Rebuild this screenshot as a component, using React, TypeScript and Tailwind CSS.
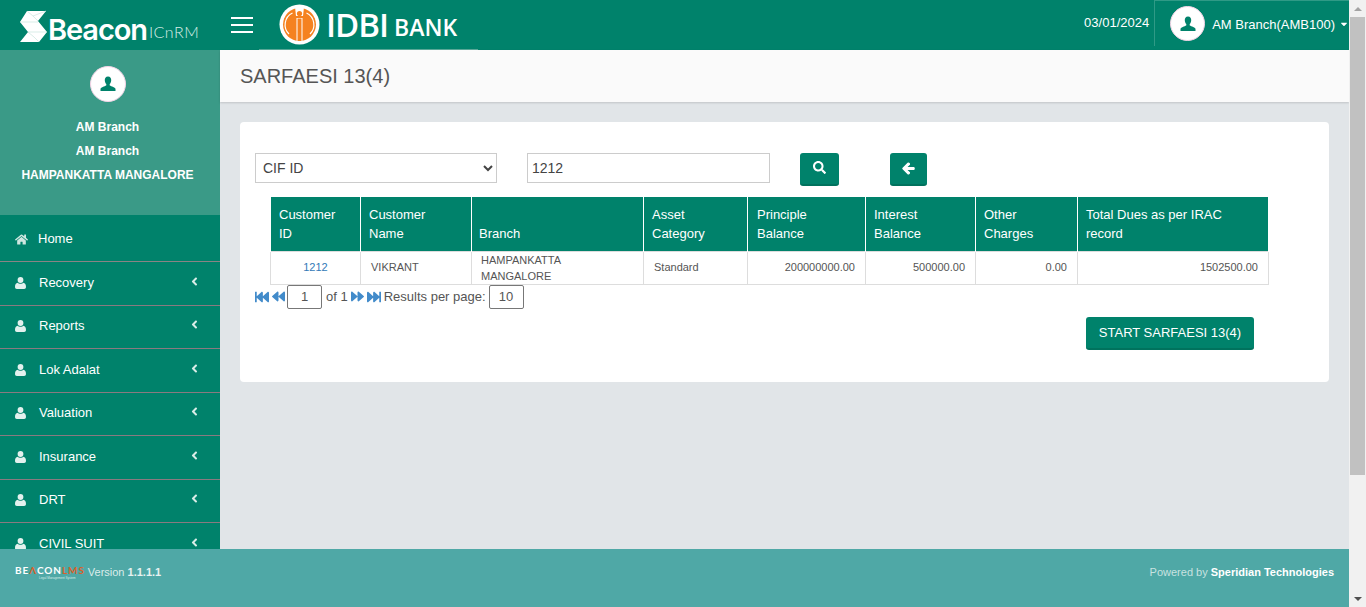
import { FaHome, FaAngleLeft, FaSearch, FaArrowLeft, FaCaretDown, FaFastBackward, FaBackward, FaForward, FaFastForward } from "react-icons/fa";

const menu = ["Recovery", "Reports", "Lok Adalat", "Valuation", "Insurance", "DRT", "CIVIL SUIT"];

const columns = [
  { label: ["Customer", "ID"], width: "w-[90px]", pad: "pl-2" },
  { label: ["Customer", "Name"], width: "w-[111px]", pad: "pl-2" },
  { label: ["Branch"], width: "w-[172px]", pad: "pl-[7px]" },
  { label: ["Asset", "Category"], width: "w-[104px]", pad: "pl-2" },
  { label: ["Principle", "Balance"], width: "w-[118px]", pad: "pl-[9px]" },
  { label: ["Interest", "Balance"], width: "w-[110px]", pad: "pl-2" },
  { label: ["Other", "Charges"], width: "w-[102px]", pad: "pl-2" },
  { label: ["Total Dues as per IRAC", "record"], width: "w-[191px]", pad: "pl-2" },
];

const Avatar = ({ size }: { size: string }) => (
  <div className={`${size} rounded-full bg-white border border-[#f3d3e6] flex items-center justify-center shrink-0`}>
    <svg width="16" height="16" viewBox="0 0 16 16" fill="#00826b">
      <path d="M8 0.5c2.300 0 3.400 1.800 3.200 3.900-.1 1.500-.7 2.800-1.500 3.600v1.300c0 .8 4.800 1.600 5.800 3.400v2.300H.5v-2.300c1-1.800 5.800-2.600 5.800-3.400V8c-.8-.8-1.400-2.100-1.500-3.600C4.600 2.300 5.700.5 8 .5z" />
    </svg>
  </div>
);

const MenuUser = () => (
  <svg width="11" height="12" viewBox="0 0 11 12" fill="#e3f1ee" className="shrink-0">
    <ellipse cx="5.500" cy="3" rx="2.900" ry="3" />
    <path d="M0 10c0-2.600 1-4 2.600-4.200.7.600 1.800 1 2.900 1s2.200-.4 2.900-1C10 6 11 7.400 11 10c0 1.300-.8 2-1.800 2H1.800C.8 12 0 11.300 0 10z" />
  </svg>
);

const BeaconMark = () => (
  <svg width="27" height="33" viewBox="0 0 27 33">
    <path d="M7 1h19l-8 10 9 11-8 10H0l8-10L0 12z" fill="#fff" />
    <path d="M7 1l6 5 5 5M0 12h18M8 22h19M8 22l6 5 5 5M13 6l13-5" fill="none" stroke="#bfe0d8" strokeWidth="0.6" />
  </svg>
);

const IdbiMark = () => (
  <svg width="41" height="41" viewBox="0 0 41 41">
    <circle cx="20.500" cy="20.500" r="20" fill="#fff" />
    <circle cx="20.500" cy="20.500" r="16.500" fill="#f58220" />
    <path d="M10 30a13 13 0 0 1 3.500-21M31 30a13 13 0 0 0-3.500-21" fill="none" stroke="#fff" strokeWidth="1.200" />
    <path d="M16 3h9l-1 9h-7z" fill="#fff" />
    <circle cx="20.500" cy="9.500" r="2.600" fill="#f58220" />
    <path d="M17.500 14h6v23h-6z" fill="#fff" />
    <path d="M18.500 14.500h4V37h-4z" fill="#f58220" />
  </svg>
);

export default function App() {
  return (
    <div className="flex h-screen w-full overflow-hidden bg-[#f1f1f1] font-['Liberation_Sans',Arial,sans-serif]">
      <div className="flex min-w-0 flex-1 flex-col">
        {/* Top bar */}
        <header className="flex h-[50px] shrink-0 items-center bg-[#00826b] text-white">
          <div className="flex w-[220px] shrink-0 items-center pl-5 pt-0.5">
            <BeaconMark />
            <span className="mt-[6px] ml-px font-['Inter',sans-serif] text-[29px] leading-none font-semibold tracking-[-1.100px]">Beacon</span>
            <span className="mt-[11px] ml-[2px] font-['Lato',sans-serif] text-[16px] leading-none font-light tracking-[0.5px] text-[#d5ece6]">ICnRM</span>
          </div>
          <button className="ml-[11px] flex w-[22px] flex-col gap-[5px]">
            <span className="h-0.5 bg-white" />
            <span className="h-0.5 bg-white" />
            <span className="h-0.5 bg-white" />
          </button>
          <div className="ml-[6px] flex h-[50px] w-[219px] items-center gap-[6px] border-b border-[#5aa999] pl-[20px]">
            <IdbiMark />
            <span className="font-['Open_Sans',sans-serif] text-[33px] leading-none font-semibold tracking-[-1px]">IDBI</span>
            <span className="mt-[5px] font-['Open_Sans',sans-serif] text-[23px] leading-none font-semibold">BANK</span>
          </div>
          <div className="ml-auto flex h-[46px] items-start self-start">
            <span className="mt-[15px] mr-[5px] text-[13px] leading-4">03/01/2024</span>
            <div className="flex h-[46px] items-center border-t border-l border-[#2f9a86] pl-[15px]">
              <Avatar size="w-[35px] h-[35px]" />
              <span className="mt-[3px] ml-[7px] text-[13px]">AM Branch(AMB100)</span>
              <FaCaretDown className="ml-[4px] text-[10px]" />
            </div>
          </div>
        </header>

        <div className="flex min-h-0 flex-1">
          {/* Sidebar */}
          <aside className="flex w-[220px] shrink-0 flex-col overflow-hidden bg-[#00826b] text-white">
            <div className="flex h-[165px] shrink-0 flex-col items-center bg-[#3a9a87] pt-4 pr-[5px]">
              <Avatar size="w-9 h-9" />
              <div className="mt-[13px] text-center text-[12px] leading-6 font-bold">
                <p>AM Branch</p>
                <p>AM Branch</p>
                <p>HAMPANKATTA MANGALORE</p>
              </div>
            </div>
            <a className="flex h-[47px] shrink-0 items-center border-b border-[#8a8484] pt-[2px] pl-[15px] text-[13px]">
              <FaHome className="w-[13px] text-[13px] text-[#cfe6e0]" />
              <span className="ml-[10px]">Home</span>
            </a>
            {menu.map((item) => (
              <a key={item} className="flex h-[43.500px] shrink-0 items-center border-b border-[#8a7a80] pr-[19px] pb-[1.500px] pl-[15px] text-[13px]">
                <MenuUser />
                <span className="ml-[13px]">{item}</span>
                <FaAngleLeft className="mb-[3px] ml-auto text-[13px] text-[#d8ece7]" />
              </a>
            ))}
          </aside>

          {/* Main */}
          <main className="flex min-w-0 flex-1 flex-col bg-[#e1e5e8]">
            <div className="flex h-[52px] shrink-0 items-center bg-[#fafafa] pl-5 shadow-[0_1px_2px_rgba(0,0,0,0.15)]">
              <h1 className="text-[20px] text-[#555]">SARFAESI 13(4)</h1>
            </div>
            <div className="mt-5 mr-5 ml-5 h-[260px] rounded bg-white pt-[31px] pl-[15px]">
              <div className="flex items-start">
                <select className="h-[30px] w-[242px] border border-[#ccc] bg-white pl-[3px] text-[14px] text-[#444]" defaultValue="CIF ID">
                  <option>CIF ID</option>
                </select>
                <input className="ml-[30px] h-[30px] w-[243px] border border-[#ccc] px-1 text-[14px] text-[#444]" defaultValue="1212" />
                <button className="ml-[30px] flex h-[33px] w-[39px] items-center justify-center rounded-[3px] border-b-2 border-[#00725d] bg-[#00826b] pb-[3px] text-white">
                  <FaSearch className="text-[13px]" />
                </button>
                <button className="ml-[51px] flex h-[33px] w-[37px] items-center justify-center rounded-[3px] border-b-2 border-[#00725d] bg-[#00826b] text-white">
                  <FaArrowLeft className="text-[13px] stroke-[40]" />
                </button>
              </div>

              <table className="mt-[11px] ml-[15px] w-[998px] table-fixed border-collapse">
                <thead>
                  <tr className="h-[54px] bg-[#00826b] text-white">
                    {columns.map((c) => (
                      <th key={c.width} className={`${c.width} ${c.pad} border-x border-white pb-2 text-left align-bottom text-[13px] leading-[19px] font-normal`}>
                        {c.label.map((l) => (
                          <div key={l} className="whitespace-nowrap">{l}</div>
                        ))}
                      </th>
                    ))}
                  </tr>
                </thead>
                <tbody>
                  <tr className="h-[33px] text-[11px] text-[#555]">
                    <td className="border border-[#ddd] text-center text-[#337ab7]">1212</td>
                    <td className="border border-[#ddd] pl-2.5">VIKRANT</td>
                    <td className="border border-[#ddd] pl-[9px] leading-4">HAMPANKATTA<br />MANGALORE</td>
                    <td className="border border-[#ddd] pl-2.5">Standard</td>
                    <td className="border border-[#ddd] pr-2.5 text-right">200000000.00</td>
                    <td className="border border-[#ddd] pr-2.5 text-right">500000.00</td>
                    <td className="border border-[#ddd] pr-2.5 text-right">0.00</td>
                    <td className="border border-[#ddd] pr-2.5 text-right">1502500.00</td>
                  </tr>
                </tbody>
              </table>

              <div className="flex items-center text-[13px] text-[#555]">
                <FaFastBackward className="text-[14px] text-[#428bca]" />
                <FaBackward className="ml-[3px] text-[13px] text-[#428bca]" />
                <span className="ml-[2px] flex h-[24px] w-[35px] items-center justify-center rounded-[2px] border border-[#777]">1</span>
                <span className="ml-[4px]">of 1</span>
                <FaForward className="ml-[3px] text-[13px] text-[#428bca]" />
                <FaFastForward className="ml-[3px] text-[14px] text-[#428bca]" />
                <span className="ml-[3px]">Results per page:</span>
                <span className="ml-[3px] flex h-[24px] w-[35px] items-center justify-center rounded-[2px] border border-[#777]">10</span>
              </div>

              <div className="mt-2 flex justify-end pr-[75px]">
                <button className="h-[33px] w-[168px] rounded-[3px] border-b-2 border-[#00725d] bg-[#00826b] pt-[2px] text-[13px] text-white">START SARFAESI 13(4)</button>
              </div>
            </div>
          </main>
        </div>

        {/* Footer */}
        <footer className="flex h-[58px] shrink-0 items-start justify-between bg-[#4fa8a6] pt-[15px] pr-[15px] pl-[15px] text-[11px]">
          <div className="flex items-start">
            <div className="flex flex-col">
              <span className="font-['Lato',sans-serif] text-[10px] leading-[12px] font-bold tracking-[0.900px] whitespace-nowrap text-white">BE<span className="text-[#d9622b]">Λ</span>CON<span className="text-[#d9622b]">LMS</span></span>
              <span className="pl-6 text-[3px] leading-[5px] text-[#d5ece6]">Legal Management System</span>
            </div>
            <span className="ml-[3px] text-[#dcecea]">Version <span className="font-bold text-[#e8f2f1]">1.1.1.1</span></span>
          </div>
          <div className="text-[#c9e2e0]">Powered by <span className="font-bold text-white">Speridian Technologies</span></div>
        </footer>
      </div>

      {/* Scrollbar of the window */}
      <div className="flex w-[17px] shrink-0 flex-col items-center bg-[#f1f1f1]">
        <div className="flex h-[17px] items-center justify-center">
          <div className="h-0 w-0 border-x-4 border-b-4 border-x-transparent border-b-[#a3a3a3]" />
        </div>
        <div className="h-[458px] w-[15px] bg-[#c1c1c1]" />
        <div className="mt-auto flex h-[17px] items-center justify-center">
          <div className="h-0 w-0 border-x-4 border-t-4 border-x-transparent border-t-[#505050]" />
        </div>
      </div>
    </div>
  );
}
